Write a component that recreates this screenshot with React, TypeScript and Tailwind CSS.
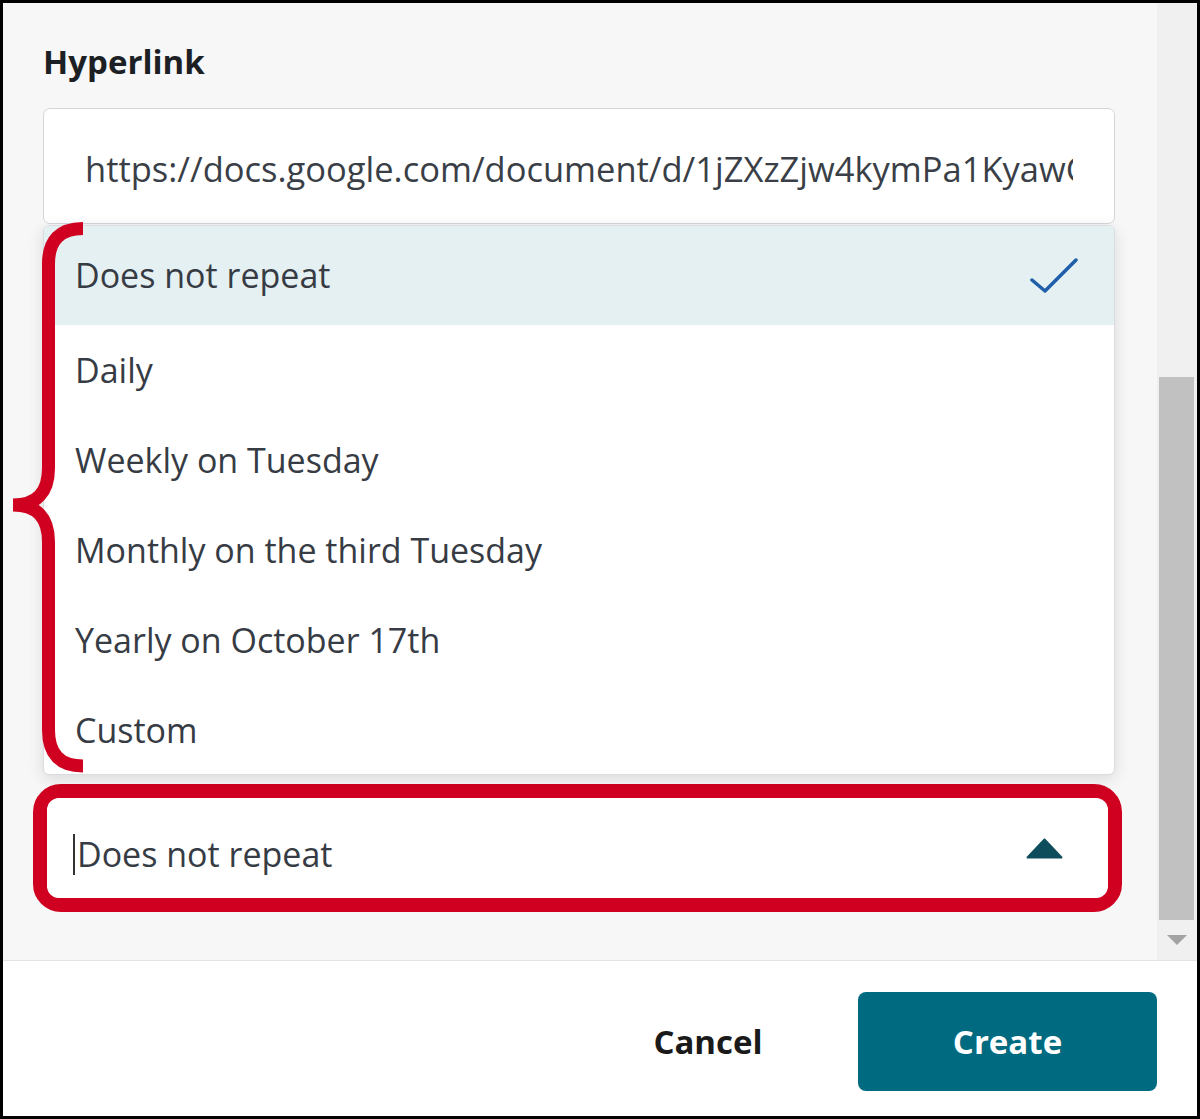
const options = [
  "Does not repeat",
  "Daily",
  "Weekly on Tuesday",
  "Monthly on the third Tuesday",
  "Yearly on October 17th",
  "Custom",
];

function RepeatMenu() {
  return (
    <div className="absolute left-[40px] top-[222px] z-10 w-[1072px] h-[550px] bg-white border border-[#d9dde0] rounded-[6px] shadow-[0_4px_16px_rgba(0,0,0,0.12)] overflow-hidden">
      {options.map((opt, i) => (
        <div
          key={opt}
          className={
            i === 0
              ? "flex items-center justify-between h-[99px] pl-[31px] pr-[36px] bg-[#e5f0f2]"
              : "flex items-center h-[90px] pl-[31px]"
          }
        >
          <span className="text-[34px] text-[#363b44]">{opt}</span>
          {i === 0 && (
            <svg width="48" height="37" viewBox="0 0 48 37">
              <path
                d="M2 23 L15 34 L46 3"
                fill="none"
                stroke="#1f5ea8"
                strokeWidth="3.5"
                strokeLinecap="round"
                strokeLinejoin="round"
              />
            </svg>
          )}
        </div>
      ))}
    </div>
  );
}

export default function App() {
  return (
    <div className="w-[1200px] h-[1119px] border-[3px] border-black flex flex-col bg-white font-['Open_Sans',sans-serif] overflow-hidden">
      {/* Scrollable form body */}
      <div className="h-[958px] flex bg-[#f7f7f7] border-b border-[#e3e3e3]">
        <div className="flex-1 relative">
          <div className="pl-[40px] pt-[37px]">
            <label className="block text-[33px] leading-[44px] font-bold text-[#1c1f24]">
              Hyperlink
            </label>
            <input
              readOnly
              value="https://docs.google.com/document/d/1jZXzZjw4kymPa1KyawCbX2sT9"
              className="mt-[24px] block w-[1072px] h-[116px] bg-white border border-[#d3d7db] rounded-[7px] pl-[41px] pr-[41px] pt-[4px] text-[34.5px] text-[#3a3f47] outline-none"
            />

            {/* Repeat select, highlighted */}
            <div className="mt-[560px] ml-[-10px] w-[1089px] border-[14px] border-[#d00020] rounded-[28px]">
              <div className="h-[100px] bg-white rounded-[12px] flex items-center justify-between pl-[26px] pr-[45px]">
                <div className="flex items-center gap-[2px] mt-[12px]">
                  <span className="w-[2px] h-[41px] bg-[#333]" />
                  <span className="text-[34px] text-[#363b44]">Does not repeat</span>
                </div>
                <svg width="37" height="21" viewBox="0 0 37 21">
                  <path
                    d="M18.5 1.5 L35.5 19.5 L1.5 19.5 Z"
                    fill="#0e4d5c"
                    stroke="#0e4d5c"
                    strokeWidth="2"
                    strokeLinejoin="round"
                  />
                </svg>
              </div>
            </div>
          </div>

          <RepeatMenu />

          {/* Annotation brace */}
          <svg
            className="absolute left-0 top-0 z-20 pointer-events-none"
            width="100"
            height="800"
            viewBox="0 0 100 800"
          >
            <path
              d="M80 225.5 Q45.5 225.5 45.5 261 L45.5 465 Q45.5 502 10 502 M10 502 Q45.5 502 45.5 539 L45.5 727 Q45.5 763 80 763"
              fill="none"
              stroke="#d00020"
              strokeWidth="13"
            />
          </svg>
        </div>

        {/* Scrollbar */}
        <div className="w-[40px] bg-[#f0f0f0] flex flex-col pt-[374px]">
          <div className="h-[543px] ml-[2px] mr-[3px] bg-[#c1c1c1]" />
          <div className="flex justify-center mt-[15px]">
            <svg width="20" height="10" viewBox="0 0 20 10">
              <path d="M0 0 L20 0 L10 10 Z" fill="#a3a3a3" />
            </svg>
          </div>
        </div>
      </div>

      {/* Footer */}
      <div className="flex-1 flex justify-end items-start pt-[31px] pr-[40px]">
        <button className="w-[200px] h-[99px] mr-[50px] text-[33px] font-bold text-[#1a1a1a]">
          Cancel
        </button>
        <button className="w-[299px] h-[99px] rounded-[8px] bg-[#006b80] text-[33px] font-bold text-white">
          Create
        </button>
      </div>
    </div>
  );
}
